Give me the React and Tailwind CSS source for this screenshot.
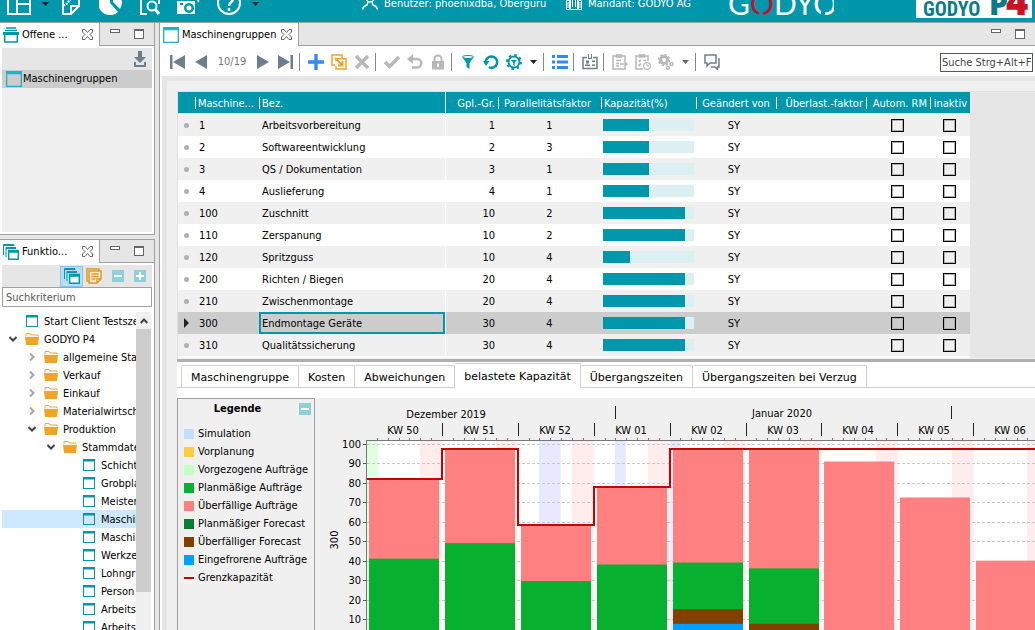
import { useState } from 'react';
import clsx from 'clsx';

const MACHINES = [
  { id: '1', name: 'Arbeitsvorbereitung', group: 1, factor: 1, load: 50 },
  { id: '2', name: 'Softwareentwicklung', group: 2, factor: 3, load: 50 },
  { id: '3', name: 'QS / Dokumentation', group: 3, factor: 1, load: 50 },
  { id: '4', name: 'Auslieferung', group: 4, factor: 1, load: 50 },
  { id: '100', name: 'Zuschnitt', group: 10, factor: 2, load: 90 },
  { id: '110', name: 'Zerspanung', group: 10, factor: 2, load: 90 },
  { id: '120', name: 'Spritzguss', group: 10, factor: 4, load: 30 },
  { id: '200', name: 'Richten / Biegen', group: 20, factor: 4, load: 90 },
  { id: '210', name: 'Zwischenmontage', group: 20, factor: 4, load: 90 },
  { id: '300', name: 'Endmontage Geräte', group: 30, factor: 4, load: 90 },
  { id: '310', name: 'Qualitätssicherung', group: 30, factor: 4, load: 90 },
];

const TREE = [
  { level: 0, kind: 'leaf', label: 'Start Client Testsze' },
  { level: 0, kind: 'open', label: 'GODYO P4' },
  { level: 1, kind: 'closed', label: 'allgemeine Star' },
  { level: 1, kind: 'closed', label: 'Verkauf' },
  { level: 1, kind: 'closed', label: 'Einkauf' },
  { level: 1, kind: 'closed', label: 'Materialwirtsch' },
  { level: 1, kind: 'open', label: 'Produktion' },
  { level: 2, kind: 'open', label: 'Stammdate' },
  { level: 3, kind: 'leaf', label: 'Schicht' },
  { level: 3, kind: 'leaf', label: 'Grobpla' },
  { level: 3, kind: 'leaf', label: 'Meister' },
  { level: 3, kind: 'leaf', label: 'Maschin', active: true },
  { level: 3, kind: 'leaf', label: 'Maschin' },
  { level: 3, kind: 'leaf', label: 'Werkze' },
  { level: 3, kind: 'leaf', label: 'Lohngr' },
  { level: 3, kind: 'leaf', label: 'Person' },
  { level: 3, kind: 'leaf', label: 'Arbeits' },
  { level: 3, kind: 'leaf', label: 'Arbeits' },
];

const INDENT = ['pl-1', 'pl-[23px]', 'pl-[42px]', 'pl-[61px]'];

const DETAIL_TABS = [
  'Maschinengruppe',
  'Kosten',
  'Abweichungen',
  'belastete Kapazität',
  'Übergangszeiten',
  'Übergangszeiten bei Verzug',
];

const LEGEND = [
  ['Simulation', 'bg-[#c0deff]'],
  ['Vorplanung', 'bg-[#ffcc40]'],
  ['Vorgezogene Aufträge', 'bg-[#c4ffc4]'],
  ['Planmäßige Aufträge', 'bg-[#08b030]'],
  ['Überfällige Aufträge', 'bg-[#ff8080]'],
  ['Planmäßiger Forecast', 'bg-[#088030]'],
  ['Überfälliger Forecast', 'bg-[#804000]'],
  ['Eingefrorene Aufträge', 'bg-[#00a0ff]'],
];

const PINK = '#ff8080';
const GREEN = '#08b030';
const BROWN = '#804000';
const BLUE = '#00a0ff';

// stacked layers, each given by its upper edge in percent
const WEEKS = [
  { label: 'KW 50', limit: 82, layers: [[82, PINK], [41, GREEN]] },
  { label: 'KW 51', limit: 97.5, layers: [[97.5, PINK], [49, GREEN]] },
  { label: 'KW 52', limit: 58.5, layers: [[58.5, PINK], [29.5, GREEN]] },
  { label: 'KW 01', limit: 78, layers: [[78, PINK], [38, GREEN]] },
  { label: 'KW 02', limit: 97.5, layers: [[97.5, PINK], [39, GREEN], [15, BROWN], [7.5, BLUE]] },
  { label: 'KW 03', limit: 97.5, layers: [[97.5, PINK], [36, GREEN], [7.5, BROWN]] },
  { label: 'KW 04', limit: 97.5, layers: [[91, PINK]] },
  { label: 'KW 05', limit: 97.5, layers: [[72.5, PINK]] },
  { label: 'KW 06', limit: 97.5, layers: [[40, PINK]] },
];

export default function App() {
  return (
    <div className="flex h-screen flex-col overflow-hidden bg-[#e6e6e6] font-['DejaVu_Sans_Condensed','Noto_Sans',sans-serif] text-[11px] leading-4 text-black">
      <Header />
      <div className="flex min-h-0 flex-1 border-t border-[#a0a0a0]">
        <aside className="flex w-[155px] shrink-0 flex-col gap-1">
          <OpenPanel />
          <FunctionPanel />
        </aside>
        <main className="ml-1 flex min-w-0 flex-1 flex-col border-l border-[#a0a0a0]">
          <div className="flex h-[23px] shrink-0 border-b border-[#a0a0a0]">
            <PanelTab label="Maschinengruppen" icon={<WindowIcon className="size-4 text-[#22b0c8]" />} wide />
            <WindowButtons />
          </div>
          <Toolbar />
          <div className="flex min-h-0 flex-1 flex-col border-l-2 border-white">
            <div className="flex min-h-0 flex-1 flex-col border-t-[5px] border-l-[5px] border-[#e6e6e6] bg-[#f0f0f0] pt-2.5 pl-2.5">
              <MachineTable />
              <Details />
            </div>
          </div>
        </main>
      </div>
    </div>
  );
}

function Header() {
  return (
    <header className="flex h-[22px] shrink-0 items-end overflow-hidden bg-[#0096ac] pb-[7px] pl-[7px] text-white">
      <div className="flex items-end">
        <button type="button" aria-label="Perspektive" className="w-6">
          <svg className="block h-6 w-6" viewBox="0 0 24 24" fill="none" stroke="currentColor" strokeWidth="2">
            <path d="M1 1h22v22H1zM10 1v22M10 13h13" />
          </svg>
        </button>
        <Caret className="mb-[9px] ml-[11px] text-[#222]" />
        <button type="button" aria-label="Notiz" className="ml-[13px] w-[18px]">
          <svg className="block h-6 w-[18px]" viewBox="0 0 18 24" fill="none" stroke="currentColor" strokeWidth="2">
            <path d="M1 0v23h8l8-8V0M9 23v-8h8" />
            <path d="M1 14c6 0 4-5 11-7" strokeDasharray="2 1" />
          </svg>
        </button>
        <button type="button" aria-label="Auswertung" className="ml-[19px] w-6">
          <svg className="block size-6" viewBox="0 0 24 24">
            <path fill="currentColor" d="M11 0v12l8 9A12 12 0 1 1 11 0z" />
            <path fill="currentColor" d="M14 0v11l7 7A12 12 0 0 0 14 0z" />
          </svg>
        </button>
        <button type="button" aria-label="Suche" className="ml-[17px] w-5">
          <svg className="block h-6 w-5" viewBox="0 0 20 24" fill="none" stroke="currentColor" strokeWidth="2">
            <path d="M7 23H1V1h18v12" />
            <circle cx="12" cy="15" r="4.500" />
            <path d="m15 18 4 5" strokeWidth="3" />
          </svg>
        </button>
        <button type="button" aria-label="Kamera" className="ml-[17px] w-6">
          <svg className="block h-6 w-6" viewBox="0 0 24 24">
            <path fill="currentColor" fillRule="evenodd" d="M0 10h18v13H0zM3 12v2h3v-2zM12 12a5 5 0 1 0 .1 0zM12 14.500a2.500 2.500 0 1 1-.1 0z" />
            <path fill="currentColor" d="M20 8l4-2-3 6z" />
          </svg>
        </button>
        <button type="button" aria-label="Hilfe" className="ml-4 w-6">
          <svg className="block size-6" viewBox="0 0 24 24" fill="none" stroke="currentColor" strokeWidth="2">
            <circle cx="12" cy="12" r="11" />
            <path d="M8 8c0-5 8-5 8 0 0 3-4 3-4 7M12 17v3" strokeWidth="2.500" />
          </svg>
        </button>
        <Caret className="mb-[9px] ml-[11px] text-[#222]" />
      </div>

      <div className="ml-[103px] flex w-[204px] shrink-0 items-end gap-1.5 pb-[3px] whitespace-nowrap">
        <svg className="mb-0.5 h-4 w-4 shrink-0" viewBox="0 0 16 16" fill="none" stroke="currentColor" strokeWidth="1.500">
          <circle cx="8" cy="4" r="4" />
          <path d="M.7 15.500c0-3 2-3.500 4.300-4.500l1-3M15.300 15.500c0-3-2-3.500-4.300-4.500l-1-3" />
        </svg>
        Benutzer: phoenixdba, Oberguru
      </div>
      <div className="flex w-[162px] shrink-0 items-end gap-1.5 pb-[3px] whitespace-nowrap">
        <svg className="mb-0.5 h-4 w-4 shrink-0" viewBox="0 0 16 16" fill="none" stroke="currentColor">
          <path d="M.5 6.500h3v9h-3zM4.500.500h7v15h-7zM12.500 6.500h3v9h-3zM6.500 3v10M9.500 3v10M2 8v6M14 8v6" />
        </svg>
        Mandant: GODYO AG
      </div>

      <svg className="mb-[-7px] h-10 w-[106px] shrink-0" viewBox="0 0 106 40" role="img" aria-label="GODYO">
        <text y="33" fontFamily="Lato, sans-serif" fontSize="30" fill="#fff">
          G<tspan fill="#c8102e">O</tspan>DYO
        </text>
        <path d="M31 29h4v7h-4zM93 29h4v7h-4z" fill="#0096ac" />
      </svg>
      <div className="mr-[3px] mb-[-3px] ml-auto h-10 w-[116px] shrink-0 bg-white">
        <svg className="block h-10 w-[116px]" viewBox="0 0 116 40" role="img" aria-label="GODYO P4">
          <text x="7" y="38" fontFamily="'Liberation Sans Narrow', 'Roboto Condensed', sans-serif" fontWeight="700" fontSize="20" fill="#0b7b8a">GODYO</text>
          <text x="73" y="37" fontFamily="'Open Sans', sans-serif" fontWeight="800" fontSize="30" fill="#0b7b8a">P</text>
          <text x="90" y="37" fontFamily="'Open Sans', sans-serif" fontWeight="800" fontSize="38" fill="#cc1025">4</text>
        </svg>
      </div>
    </header>
  );
}

function PanelTab({ label, icon, wide }) {
  return (
    <div className={clsx('-mb-px flex items-center border-r border-[#a0a0a0] bg-white', wide ? 'w-[139px] pl-[3px]' : 'w-[100px] pl-[3px]')}>
      {icon}
      <span className={clsx('ml-[3px] whitespace-nowrap', wide ? 'w-[95px]' : 'w-14')}>{label}</span>
      <button type="button" aria-label="Schließen" className="ml-1">
        <svg className="block size-[11px]" viewBox="0 0 11 11" fill="none" stroke="#666">
          <path d="M.5.500h2.500l2.500 3 2.500-3h2.500v2.500L8 5.500l2.500 2.500v2.500H8l-2.500-3-2.500 3H.5V8L3 5.500.500 3z" />
        </svg>
      </button>
    </div>
  );
}

function WindowButtons() {
  return (
    <div className="ml-auto flex items-start gap-3.5 pt-1.5 pr-2.5">
      <button type="button" aria-label="Minimieren" className="h-1 w-2.5 border border-[#666] bg-white" />
      <button type="button" aria-label="Maximieren" className="size-2.5 border border-t-2 border-[#666] bg-white" />
    </div>
  );
}

function OpenPanel() {
  return (
    <section className="flex h-[212px] shrink-0 flex-col border-r border-b border-[#a0a0a0] bg-white">
      <div className="flex h-[23px] shrink-0 border-b border-[#a0a0a0] bg-[#e6e6e6]">
        <PanelTab
          label="Offene ..."
          icon={
            <svg className="size-4 shrink-0" viewBox="0 0 16 16" fill="none" stroke="#0096ac" strokeWidth="1.500">
              <path d="M3 1h10M2 3.500h12" />
              <path d="M0 5h16v3H0z" fill="#0096ac" stroke="none" />
              <path d="M1.700 8v7h12.600V8" />
            </svg>
          }
        />
        <WindowButtons />
      </div>
      <div className="m-0.5 flex flex-1 flex-col bg-[#f0f0f0]">
        <div className="flex h-[22px] items-center justify-end bg-[#e6e6e6] pr-1.5">
          <button type="button" aria-label="Ablegen">
            <svg className="block h-4 w-3" viewBox="0 0 12 16" fill="#6c7f8c">
              <path d="M4 0h4v6h4l-6 6-6-6h4zM0 11h2v3h8v-3h2v5H0z" />
            </svg>
          </button>
        </div>
        <button type="button" className="flex h-[18px] items-center gap-px bg-[#ccc] pl-1">
          <WindowIcon className="size-4 text-[#22b0c8]" />
          Maschinengruppen
        </button>
      </div>
    </section>
  );
}

function FunctionPanel() {
  const [query, setQuery] = useState('');
  return (
    <section className="flex min-h-0 flex-1 flex-col border-t border-r border-[#a0a0a0] bg-white">
      <div className="flex h-[23px] shrink-0 border-b border-[#a0a0a0] bg-[#e6e6e6]">
        <PanelTab label="Funktio..." icon={<StackIcon className="size-4 shrink-0" />} />
        <WindowButtons />
      </div>
      <div className="mx-0.5 mt-0.5 flex h-[22px] shrink-0 items-center justify-end gap-2.5 bg-[#e6e6e6] pr-1.5">
        <button type="button" aria-label="Fenster" className="-mr-[7px] flex h-[21px] w-[23px] items-center justify-center border border-[#8cc4f0] bg-[#b9dcf5]">
          <StackIcon className="size-4" />
        </button>
        <button type="button" aria-label="Notizen">
          <svg className="block size-4" viewBox="0 0 16 16" fill="#fbe9c8" stroke="#dd9a2b" strokeWidth="1.500">
            <path d="M1 1h12v9l-3 3H1z" />
            <path d="M3 3h12v8l-4 4H3zM11 15v-4h4M5.500 6h7M5.500 8.500h7M5.500 11h4" />
          </svg>
        </button>
        <SquareButton label="Zuklappen" />
        <SquareButton label="Aufklappen" plus />
      </div>
      <input
        aria-label="Suchkriterium"
        placeholder="Suchkriterium"
        value={query}
        onChange={(e) => setQuery(e.target.value)}
        className="mx-0.5 h-5 shrink-0 border border-[#a0a0a0] bg-white px-[3px] outline-none placeholder:text-[#555]"
      />
      <div className="mr-[3px] ml-0.5 mt-[5px] flex min-h-0 flex-1 overflow-hidden">
        <ul className="min-w-0 flex-1 overflow-hidden">
          {TREE.map((node, i) => (
            <TreeRow key={i} {...node} />
          ))}
        </ul>
        <div className="flex w-[15px] shrink-0 flex-col bg-[#f0f0f0]">
          <button type="button" aria-label="Nach oben" className="grid h-[17px] place-items-center">
            <svg className="h-1.5 w-2" viewBox="0 0 8 6" fill="none" stroke="#444" strokeWidth="2">
              <path d="M.7 5 4 1.500 7.300 5" />
            </svg>
          </button>
          <div className="h-[263px] bg-[#cdcdcd]" />
        </div>
      </div>
    </section>
  );
}

function TreeRow({ level, kind, label, active }) {
  return (
    <li>
      <button type="button" className={clsx('flex h-[18px] w-full items-center gap-[5px] whitespace-nowrap', INDENT[level], active && 'bg-[#cde8ff]')}>
        <span className="grid w-3.5 shrink-0 place-items-center">
          {kind === 'open' && (
            <svg className="h-1.5 w-2" viewBox="0 0 8 6" fill="none" stroke="#444" strokeWidth="2">
              <path d="M.5 1 4 4.500 7.500 1" />
            </svg>
          )}
          {kind === 'closed' && (
            <svg className="h-2 w-1.5" viewBox="0 0 6 8" fill="none" stroke="#a6a6a6" strokeWidth="2">
              <path d="M1 .5 4.500 4 1 7.500" />
            </svg>
          )}
        </span>
        <span className="grid w-3.5 shrink-0 place-items-center">
          {kind === 'leaf' ? <WindowIcon className="size-3 text-[#0096ac]" /> : <FolderIcon />}
        </span>
        <span className="pt-0.5">{label}</span>
      </button>
    </li>
  );
}

function SquareButton({ label, plus }) {
  return (
    <button type="button" aria-label={label} className="grid size-3 place-items-center bg-[#8fd0d8]">
      <svg className="size-2" viewBox="0 0 8 8" stroke="#fff" strokeWidth="2">
        <path d={plus ? 'M0 4h8M4 0v8' : 'M0 4h8'} />
      </svg>
    </button>
  );
}

function Toolbar() {
  return (
    <div className="flex h-[30px] shrink-0 items-center bg-white pt-0.5 pr-0.5 pl-2.5">
      <div className="flex items-center gap-[7px]">
        <Tool label="Erster"><path fill="#6c7f8c" d="M0 1h2.500v14H0zM15 1v14L3 8z" /></Tool>
        <Tool label="Vorheriger"><path fill="#6c7f8c" d="M14 1v14L2 8z" /></Tool>
        <span className="w-8 text-center text-[#777]">10/19</span>
        <Tool label="Nächster"><path fill="#6c7f8c" d="M2 1v14l12-7z" /></Tool>
        <Tool label="Letzter"><path fill="#6c7f8c" d="M12.500 1H15v14h-2.500zM0 1v14l12-7z" /></Tool>
      </div>
      <Group>
        <Tool label="Neu"><path fill="#3388f5" d="M6.300 0h3.400v6.300H16v3.400H9.700V16H6.300V9.700H0V6.300h6.300z" /></Tool>
        <Tool label="Kopieren">
          <g fill="none" stroke="#f0a528" strokeWidth="1.500">
            <path d="M4 11H1V1h10v3M5 7V4.800h10V15H5v-3" />
            <path d="m4 4 7 7M11.500 7v4.500H7" strokeWidth="2" />
          </g>
        </Tool>
        <Tool label="Löschen"><path stroke="#b8b8b8" strokeWidth="3.500" d="m2 2 12 12M14 2 2 14" /></Tool>
      </Group>
      <Group>
        <Tool label="Speichern"><path fill="none" stroke="#b8b8b8" strokeWidth="3.500" d="m1 8 4.500 4.500L15 3" /></Tool>
        <Tool label="Rückgängig">
          <path fill="none" stroke="#b8b8b8" strokeWidth="2.500" d="M3 5h7a4.300 4.300 0 0 1 0 8.600H5" />
          <path fill="#b8b8b8" d="M0 5l6-5v10z" />
        </Tool>
        <Tool label="Sperren">
          <path fill="none" stroke="#b8b8b8" strokeWidth="2" d="M4.500 8V5a3.500 3.500 0 0 1 7 0v3" />
          <path fill="#b8b8b8" fillRule="evenodd" d="M2 7h12v8.500H2zM7 9.500V13h2V9.500z" />
        </Tool>
      </Group>
      <Group>
        <Tool label="Filter">
          <path fill="#0096ac" d="M2 3h12l-4.500 6v6l-3-2V9z" />
          <ellipse cx="8" cy="3" rx="5.500" ry="1.500" fill="#fff" stroke="#0096ac" />
        </Tool>
        <Tool label="Aktualisieren">
          <path fill="none" stroke="#0096ac" strokeWidth="2.500" d="M2.800 9a5.700 5.700 0 1 1 3 4.200" />
          <path fill="#0096ac" d="M0 7h6.500L3 12z" />
        </Tool>
        <Tool label="Filtereinstellungen">
          <circle cx="8" cy="8" r="7" fill="none" stroke="#0096ac" strokeWidth="2" strokeDasharray="2.500 3" />
          <circle cx="8" cy="8" r="5.500" fill="none" stroke="#0096ac" strokeWidth="2" />
          <path fill="#0096ac" d="M5 6h6L8.700 8.700V12L7.300 11V8.700z" />
        </Tool>
        <Caret className="mx-px text-[#222]" />
      </Group>
      <Group>
        <Tool label="Liste"><path fill="#3388f5" d="M0 1h3v3H0zM5 1h11v3H5zM0 6.500h3v3H0zM5 6.500h11v3H5zM0 12h3v3H0zM5 12h11v3H5z" /></Tool>
      </Group>
      <Group>
        <Tool label="Ausweis">
          <path fill="none" stroke="#6c7f8c" strokeWidth="1.500" d="M5 3.500H1v11h14v-11h-4" />
          <path fill="#6c7f8c" d="M6 0h1v4h2V0h1v5H6zM4 6.500h3v3H4zM3 10.500h5V12H3zM10 6.500h3V8h-3zM10 10.500h3V12h-3z" />
        </Tool>
      </Group>
      <Group>
        <Tool label="Export">
          <path fill="none" stroke="#b8b8b8" strokeWidth="1.500" d="M13 7V2H1v13h12v-2M4.500 3V1h5v2zM4 6.500h5M4 9.500h3M4 12h3M8 10h7M12 7l3 3-3 3" />
        </Tool>
        <Tool label="Termin">
          <path fill="none" stroke="#b8b8b8" strokeWidth="1.500" d="M13 7V2H1v13h7M4.500 3V1h5v2zM3.500 6.500l1 1 1.500-2M8 6.500h3M3.500 10.500l1 1 1.500-2" />
          <circle cx="12" cy="12" r="3.300" fill="#fff" stroke="#b8b8b8" strokeWidth="1.200" />
          <path stroke="#b8b8b8" d="M12 10v2h2" fill="none" />
        </Tool>
        <Tool label="Funktionen">
          <g fill="none" stroke="#b8b8b8">
            <circle cx="6" cy="6" r="3.500" strokeWidth="3" />
            <circle cx="6" cy="6" r="5.400" strokeWidth="1.500" strokeDasharray="2.200 2" />
            <circle cx="13.500" cy="10" r="1.500" strokeWidth="1.500" />
            <circle cx="10" cy="13.700" r="1.500" strokeWidth="1.500" />
          </g>
        </Tool>
        <Caret className="mx-px text-[#666]" />
      </Group>
      <Group>
        <Tool label="Kommentare">
          <path fill="none" stroke="#6c7f8c" strokeWidth="1.500" d="M1 1h11v8H6l-3 3V9H1zM14 5h1v8h-1.500v2.500L11 13H7" />
        </Tool>
      </Group>
      <input
        aria-label="Suche"
        placeholder="Suche Strg+Alt+F"
        className="ml-auto h-[19px] w-[93px] border border-[#555] bg-white px-px outline-none placeholder:text-[#444]"
      />
    </div>
  );
}

function Group({ children }) {
  return <div className="ml-[5px] flex h-[18px] items-center gap-[7px] border-l border-[#888] pl-2">{children}</div>;
}

function Tool({ label, children }) {
  return (
    <button type="button" aria-label={label} className="shrink-0">
      <svg className="block size-4" viewBox="0 0 16 16">{children}</svg>
    </button>
  );
}

const HEAD = 'relative h-[22px] border-b border-[#e0e0e0] p-0 pt-0.5 font-normal whitespace-nowrap';

function MachineTable() {
  const [selected, setSelected] = useState('300');
  return (
    <div className="shrink-0 border-t border-l border-[#e0e0e0] bg-[#e6e6e6]">
      <table className="w-[792px] table-fixed border-separate border-spacing-0 bg-white">
        <colgroup>
          <col className="w-[17px]" />
          <col className="w-[64px]" />
          <col className="w-[186px]" />
          <col className="w-[53px]" />
          <col className="w-[103px]" />
          <col className="w-[95px]" />
          <col className="w-[80px]" />
          <col className="w-[90px]" />
          <col className="w-[64px]" />
          <col className="w-[40px]" />
        </colgroup>
        <thead className="bg-[#0096ac] text-white">
          <tr>
            <th className={HEAD} />
            <Head className="pl-[3px] text-left">Maschine...</Head>
            <Head className="pl-[3px] text-left">Bez.</Head>
            <Head className="pr-[3px] text-right" full>Gpl.-Gr.</Head>
            <Head className="pr-1 text-center">Parallelitätsfaktor</Head>
            <Head className="pl-[3px] text-left">Kapazität(%)</Head>
            <Head className="text-center">Geändert von</Head>
            <Head className="pr-[3px] text-right">Überlast.-faktor</Head>
            <Head className="pr-[3px] text-right">Autom. RM</Head>
            <Head className="pr-[3px] text-right">inaktiv</Head>
          </tr>
        </thead>
        <tbody>
          {MACHINES.map((m) => {
            const active = m.id === selected;
            return (
              <tr
                key={m.id}
                onClick={() => setSelected(m.id)}
                className={clsx('h-[22px]', active ? 'bg-[#ccc]' : 'odd:bg-[#f0f0f0] even:bg-white')}
              >
                <td className="p-0">
                  {active ? (
                    <svg className="ml-1.5 block h-2.5 w-[5px]" viewBox="0 0 5 10"><path fill="#222" d="M0 0l5 5-5 5z" /></svg>
                  ) : (
                    <span className="ml-1.5 block size-[5px] rounded-full bg-[#b0b0b0]" />
                  )}
                </td>
                <td className="p-0 pt-0.5 pl-1">{m.id}</td>
                <td className="p-0">
                  <div className={clsx('flex h-[22px] items-center border-2 pt-0.5 pl-px', active ? 'border-[#0096ac]' : 'border-transparent')}>
                    {m.name}
                  </div>
                </td>
                <td className="border-l border-white p-0 pt-0.5 pr-[3px] text-right">{m.group}</td>
                <td className="p-0 pt-0.5 text-center">{m.factor}</td>
                <td className="p-0 pl-0.5">
                  <div role="progressbar" aria-label="Kapazität" aria-valuenow={m.load} className="h-3 w-[91px] bg-[#dceff2]">
                    <div className="h-3 bg-[#0096ac]" style={{ width: `${m.load}%` }} />
                  </div>
                </td>
                <td className="p-0 pt-0.5 pr-1 text-center">SY</td>
                <td className="p-0" />
                <td className="p-0 pr-0.5"><Check label={`Autom. RM ${m.id}`} /></td>
                <td className="p-0 pr-0.5"><Check label={`inaktiv ${m.id}`} /></td>
              </tr>
            );
          })}
        </tbody>
      </table>
      <div className="h-0.5 w-[792px] bg-white" />
    </div>
  );
}

function Head({ children, className, full }) {
  return (
    <th className={clsx(HEAD, className)}>
      <span className={clsx('absolute left-0 w-px bg-white', full ? 'inset-y-0' : 'top-[5px] h-3')} />
      {children}
    </th>
  );
}

function Check({ label }) {
  return (
    <input
      type="checkbox"
      aria-label={label}
      className="mx-auto block size-[13px] appearance-none border border-black shadow-[inset_0_0_0_1px_#b0b0b0] checked:bg-[#0096ac]"
    />
  );
}

function Details() {
  const [tab, setTab] = useState('belastete Kapazität');
  return (
    <div className="mt-px flex min-h-0 flex-1 flex-col border-t-[3px] border-[#b0b0b0] bg-white">
      <div role="tablist" className="flex h-[26px] shrink-0 items-end border-b border-[#d0d0d0] pl-1 font-['DejaVu_Sans',sans-serif]">
        {DETAIL_TABS.map((t) => (
          <button
            key={t}
            type="button"
            role="tab"
            aria-selected={t === tab}
            onClick={() => setTab(t)}
            className={clsx(
              'rounded-t-xs border-t border-r border-[#d0d0d0] px-[9px] whitespace-nowrap first:border-l',
              t === tab ? '-mb-px h-[25px] bg-white pt-px' : 'h-[22px] pt-0.5',
            )}
          >
            {t}
          </button>
        ))}
      </div>
      <div className="mt-2.5 flex min-h-0 flex-1 bg-[#f0f0f0]">
        <Legend />
        <CapacityChart />
      </div>
    </div>
  );
}

function Legend() {
  return (
    <div className="w-[138px] shrink-0 border border-b-0 border-[#a0a0a0] p-px pl-1.5">
      <div className="flex h-[17px] items-center justify-between pr-0.5">
        <h2 className="flex-1 pr-2 text-center font-bold">Legende</h2>
        <SquareButton label="Legende zuklappen" />
      </div>
      <ul className="mt-2">
        {LEGEND.map(([label, color]) => (
          <li key={label} className="flex h-[18px] items-center gap-1 whitespace-nowrap">
            <span className={clsx('size-2.5 shrink-0', color)} />
            {label}
          </li>
        ))}
        <li className="flex h-[18px] items-center gap-1">
          <span className="h-0.5 w-2.5 bg-[#c80000]" />
          Grenzkapazität
        </li>
      </ul>
    </div>
  );
}

const LEFT = 52;
const TOP = 42;
const WEEK = 75.9;
const DAY = WEEK / 7;
const yOf = (v) => 46 + (100 - v) * 1.944;
const xOf = (week, day = 0) => LEFT - 1 + Math.round(week * WEEK + day * DAY);

// public holidays: [week, first day, number of days]
const HOLIDAYS = [[2, 2, 2], [3, 2, 1], [4, 0, 1]];

function CapacityChart() {
  const limit = WEEKS.map((w, i) => `${i ? 'L' : 'M'}${xOf(i)} ${Math.round(yOf(w.limit) + 0.5)}H${xOf(i + 1)}`).join('');
  const levels = [100, 90, 80, 70, 60, 50, 40, 30, 20, 10];

  return (
    <svg className="h-full min-w-0 flex-1" fontSize="11" role="img" aria-label="belastete Kapazität">
      <rect x={LEFT} y={TOP} width="100%" height="100%" fill="#fff" />
      <rect x={LEFT} y={TOP} width={DAY} height="100%" fill="#dfffdf" />
      {WEEKS.map((w, i) => (
        <rect key={w.label} x={xOf(i, 5)} y={TOP} width={DAY * 2} height="100%" fill="#ffecec" />
      ))}
      {HOLIDAYS.map(([week, day, n]) => (
        <rect key={week} x={xOf(week, day)} y={TOP} width={DAY * n} height="100%" fill="#e8e8ff" />
      ))}
      {levels.map((v) => (
        <g key={v}>
          <line x1={LEFT} x2="100%" y1={Math.round(yOf(v)) + 0.5} y2={Math.round(yOf(v)) + 0.5} stroke="#c8c8c8" strokeDasharray="3 2" />
          <line x1={LEFT - 4} x2={LEFT} y1={Math.round(yOf(v)) + 0.5} y2={Math.round(yOf(v)) + 0.5} stroke="#555" />
          <text x={LEFT - 6} y={yOf(v) + 4} textAnchor="end">{v}</text>
        </g>
      ))}

      {WEEKS.map((w, i) => (
        <g key={w.label}>
          {w.layers.map(([top, color]) => (
            <rect key={color} x={xOf(i) + 3} y={yOf(top)} width="70" height="400" fill={color} />
          ))}
        </g>
      ))}
      <path d={limit} fill="none" stroke="#c80000" strokeWidth="2" />

      <path d={`M${LEFT - 0.5} 600V${TOP}`} stroke="#777" fill="none" />
      <line x1={LEFT - 1} x2="100%" y1={TOP + 0.5} y2={TOP + 0.5} stroke="#777" />
      {WEEKS.map((w, i) => (
        <g key={w.label}>
          {[1, 2, 3, 4, 5, 6].map((d) => (
            <path key={d} d={`M${xOf(i, d) + 0.5} ${TOP - 2}v2`} stroke="#777" />
          ))}
          {i > 0 && <path d={`M${xOf(i) + 0.5} 25v13`} stroke="#222" />}
          <text x={xOf(i) + 37} y="36" textAnchor="middle">{w.label}</text>
        </g>
      ))}
      <path d="M300.500 8v13M636.500 8v13" stroke="#222" />
      <text x="131" y="20" textAnchor="middle">Dezember 2019</text>
      <text x="467" y="19" textAnchor="middle">Januar 2020</text>
      <text transform="translate(23 142) rotate(-90)" textAnchor="middle">300</text>
    </svg>
  );
}

function Caret({ className }) {
  return (
    <svg className={clsx('block h-1 w-[7px] shrink-0', className)} viewBox="0 0 7 4">
      <path fill="currentColor" d="M0 0h7L3.500 4z" />
    </svg>
  );
}

function WindowIcon({ className }) {
  return (
    <svg className={clsx('block shrink-0', className)} viewBox="0 0 12 12">
      <path fill="currentColor" fillRule="evenodd" d="M0 0h12v12H0zM1 2.500V11h10V2.500z" />
    </svg>
  );
}

function StackIcon({ className }) {
  return (
    <svg className={className} viewBox="0 0 16 16" fill="none" stroke="#0096ac">
      <path d="M.5 11V.500H11M.500 1.500h11M3 13V3.500h10M3 4.500h10" />
      <path d="M5.700 6.500h9.600v8.800H5.700z" fill="#fff" strokeWidth="1.400" />
      <path d="M5 7.500h11" strokeWidth="2.500" />
    </svg>
  );
}

function FolderIcon() {
  return (
    <svg className="block h-3 w-3.5" viewBox="0 0 14 12">
      <path fill="none" stroke="#f0a528" d="M1 3.500v-3h4l1 1.500h7v1.500" />
      <path fill="#f0a528" d="M0 4h14l-1 8H1z" />
    </svg>
  );
}
